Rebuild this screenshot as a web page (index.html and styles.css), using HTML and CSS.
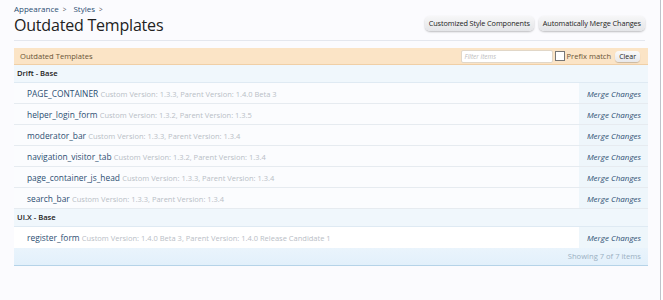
FILE: index.html
```html
<!DOCTYPE html>
<html>
<head>
<meta charset="utf-8">
<link rel="stylesheet" href="styles.css">
</head>
<body>
<div class="page">
  <div class="crumbs"><a>Appearance</a><span class="sep">&gt;</span><a>Styles</a><span class="sep">&gt;</span></div>
  <div class="titlebar">
    <h1>Outdated Templates</h1>
    <div class="topctrls">
      <span class="btn">Customized Style Components</span>
      <span class="btn">Automatically Merge Changes</span>
    </div>
  </div>
  <div class="list">
    <div class="listhead">
      <span class="lh-title">Outdated Templates</span>
      <div class="filter">
        <span class="input">Filter items</span>
        <span class="check"></span>
        <span class="prefix">Prefix match</span>
        <span class="clear">Clear</span>
      </div>
    </div>
    <div class="group">Drift - Base</div>
    <div class="row"><div class="cell"><a>PAGE_CONTAINER</a> <span class="meta">Custom Version: 1.3.3, Parent Version: 1.4.0 Beta 3</span></div><div class="action">Merge Changes</div></div>
    <div class="row"><div class="cell"><a>helper_login_form</a> <span class="meta">Custom Version: 1.3.2, Parent Version: 1.3.5</span></div><div class="action">Merge Changes</div></div>
    <div class="row"><div class="cell"><a>moderator_bar</a> <span class="meta">Custom Version: 1.3.3, Parent Version: 1.3.4</span></div><div class="action">Merge Changes</div></div>
    <div class="row"><div class="cell"><a>navigation_visitor_tab</a> <span class="meta">Custom Version: 1.3.2, Parent Version: 1.3.4</span></div><div class="action">Merge Changes</div></div>
    <div class="row"><div class="cell"><a>page_container_js_head</a> <span class="meta">Custom Version: 1.3.3, Parent Version: 1.3.4</span></div><div class="action">Merge Changes</div></div>
    <div class="row"><div class="cell"><a>search_bar</a> <span class="meta">Custom Version: 1.3.3, Parent Version: 1.3.4</span></div><div class="action">Merge Changes</div></div>
    <div class="group">UI.X - Base</div>
    <div class="row last"><div class="cell"><a>register_form</a> <span class="meta">Custom Version: 1.4.0 Beta 3, Parent Version: 1.4.0 Release Candidate 1</span></div><div class="action">Merge Changes</div></div>
    <div class="listfoot">Showing 7 of 7 items</div>
  </div>
</div>
</body>
</html>
```
FILE: styles.css
```css
html, body { margin: 0; padding: 0; background: #fff; }
body { font-family: "Open Sans", "DejaVu Sans", sans-serif; }
.page {
  width: 661px;
  height: 300px;
  box-sizing: border-box;
  padding: 3px 12px 0 14px;
  background: #fbfbfe;
  border-right: 1px solid #bfc3ca;
}
.crumbs { font-size: 8px; color: #2b4e72; height: 11px; line-height: 11px; }
.crumbs .sep { margin: 0 7px 0 4px; color: #555; font-size: 6.5px; }
.titlebar {
  display: flex;
  justify-content: space-between;
  align-items: flex-end;
  border-bottom: 1px solid #e4e7ee;
  padding-bottom: 3px;
  margin-right: 3px;
}
h1 { margin: 0; font-weight: 400; font-size: 16px; letter-spacing: -0.2px; color: #222; line-height: 23px; }
.topctrls { display: flex; gap: 5px; margin-bottom: 6px; }
.btn {
  font-size: 7.3px; color: #222; background: linear-gradient(#f7f7f8, #e4e5e8);
  border-radius: 5px; padding: 2px 4px; line-height: 11px;
  box-shadow: 0 1px 2px rgba(0,0,0,.25);
  letter-spacing: -0.1px;
}
.list { margin-top: 7px; }
.listhead {
  background: #fbe4c6; border-bottom: 1px solid #f0cfa6;
  height: 16px; display: flex; align-items: center; justify-content: space-between;
  padding: 0 8px 0 6px;
}
.lh-title { font-size: 7.6px; color: #6a5436; }
.filter { display: flex; align-items: center; }
.input {
  width: 87px; height: 11px; background: #fff; border: 1px solid #e1d7c8; border-radius: 2px;
  font-size: 6.5px; font-style: italic; color: #bbb; line-height: 11px; padding-left: 3px;
}
.check { width: 8px; height: 8px; border: 1px solid #777; background: #fff; margin-left: 2px; }
.prefix { font-size: 7.6px; color: #6a5436; margin-left: 2px; }
.clear {
  font-size: 7px; color: #222; background: linear-gradient(#fafafa, #e8e8ea); border-radius: 4px;
  padding: 1px 4px; margin-left: 4px; box-shadow: 0 1px 1px rgba(0,0,0,.2);
}
.group {
  background: #f0f7fc; border-bottom: 1px solid #dfeaf3; height: 17px; line-height: 17px;
  font-size: 7.6px; font-weight: 600; color: #222; padding-left: 3px;
}
.row { display: flex; height: 20px; border-bottom: 1px solid #e6ebf0; background: #fbfcfe; }
.row.last { background: #fff; border-bottom: none; height: 21px; }
.cell { flex: 1; padding-left: 13px; line-height: 21px; font-size: 8.4px; white-space: nowrap; overflow: hidden; }
.cell a { color: #2b4e72; }
.meta { font-size: 7.5px; color: #b9bec6; }
.action {
  width: 62px; background: #eef6fb; font-size: 8px; font-style: italic; color: #2b4e72;
  line-height: 21px; text-align: right; padding-right: 7px;
}
.listfoot {
  background: linear-gradient(#eaf4fc, #e2f0fb); border-bottom: 1px solid #b5d3e8; height: 17px; line-height: 17px;
  text-align: right; font-size: 7.6px; color: #9bb0c2; padding-right: 7px;
}
```
